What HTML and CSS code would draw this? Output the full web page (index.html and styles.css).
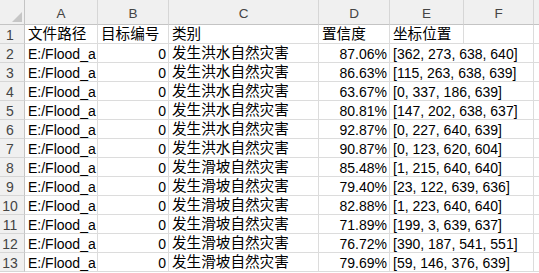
FILE: index.html
```html
<!DOCTYPE html>
<html lang="zh-CN">
<head>
<meta charset="utf-8">
<title>Sheet</title>
<link rel="stylesheet" href="styles.css">
</head>
<body>
<div class="sheet">
  <div class="corner"><svg class="tri" width="10" height="10" viewBox="0 0 10 10"><polygon points="10,0 10,10 0,10" fill="#c6c6c6"/></svg></div>
  <div class="ch">A</div><div class="ch">B</div><div class="ch">C</div><div class="ch">D</div><div class="ch">E</div><div class="ch">F</div><div class="ch last"></div>

  <div class="rh">1</div><div class="c cjk">文件路径</div><div class="c cjk">目标编号</div><div class="c cjk">类别</div><div class="c cjk">置信度</div><div class="c cjk">坐标位置</div><div class="c"></div><div class="c last"></div>

  <div class="rh">2</div><div class="c">E:/Flood_a</div><div class="c r">0</div><div class="c cjk">发生洪水自然灾害</div><div class="c r">87.06%</div><div class="c e2">[362, 273, 638, 640]</div><div class="c last"></div>
  <div class="rh">3</div><div class="c">E:/Flood_a</div><div class="c r">0</div><div class="c cjk">发生洪水自然灾害</div><div class="c r">86.63%</div><div class="c e2">[115, 263, 638, 639]</div><div class="c last"></div>
  <div class="rh">4</div><div class="c">E:/Flood_a</div><div class="c r">0</div><div class="c cjk">发生洪水自然灾害</div><div class="c r">63.67%</div><div class="c e2">[0, 337, 186, 639]</div><div class="c last"></div>
  <div class="rh">5</div><div class="c">E:/Flood_a</div><div class="c r">0</div><div class="c cjk">发生洪水自然灾害</div><div class="c r">80.81%</div><div class="c e2">[147, 202, 638, 637]</div><div class="c last"></div>
  <div class="rh">6</div><div class="c">E:/Flood_a</div><div class="c r">0</div><div class="c cjk">发生洪水自然灾害</div><div class="c r">92.87%</div><div class="c e2">[0, 227, 640, 639]</div><div class="c last"></div>
  <div class="rh">7</div><div class="c">E:/Flood_a</div><div class="c r">0</div><div class="c cjk">发生洪水自然灾害</div><div class="c r">90.87%</div><div class="c e2">[0, 123, 620, 604]</div><div class="c last"></div>
  <div class="rh">8</div><div class="c">E:/Flood_a</div><div class="c r">0</div><div class="c cjk">发生滑坡自然灾害</div><div class="c r">85.48%</div><div class="c e2">[1, 215, 640, 640]</div><div class="c last"></div>
  <div class="rh">9</div><div class="c">E:/Flood_a</div><div class="c r">0</div><div class="c cjk">发生滑坡自然灾害</div><div class="c r">79.40%</div><div class="c e2">[23, 122, 639, 636]</div><div class="c last"></div>
  <div class="rh">10</div><div class="c">E:/Flood_a</div><div class="c r">0</div><div class="c cjk">发生滑坡自然灾害</div><div class="c r">82.88%</div><div class="c e2">[1, 223, 640, 640]</div><div class="c last"></div>
  <div class="rh">11</div><div class="c">E:/Flood_a</div><div class="c r">0</div><div class="c cjk">发生滑坡自然灾害</div><div class="c r">71.89%</div><div class="c e2">[199, 3, 639, 637]</div><div class="c last"></div>
  <div class="rh">12</div><div class="c">E:/Flood_a</div><div class="c r">0</div><div class="c cjk">发生滑坡自然灾害</div><div class="c r">76.72%</div><div class="c e2">[390, 187, 541, 551]</div><div class="c last"></div>
  <div class="rh">13</div><div class="c">E:/Flood_a</div><div class="c r">0</div><div class="c cjk">发生滑坡自然灾害</div><div class="c r">79.69%</div><div class="c e2">[59, 146, 376, 639]</div><div class="c last"></div>
</div>
</body>
</html>
```

FILE: styles.css
```css
html, body {
  margin: 0;
  padding: 0;
  background: #ffffff;
}

.sheet {
  display: grid;
  grid-template-columns: 25px 73px 71px 150px 71px 74px 70px 1fr;
  grid-template-rows: 25px;
  grid-auto-rows: 19px;
  width: 539px;
  height: 273px;
  overflow: hidden;
  font-family: "Liberation Sans", "Noto Sans CJK SC", sans-serif;
  font-size: 14px;
  color: #000;
}

.sheet > div {
  box-sizing: border-box;
  overflow: hidden;
  white-space: nowrap;
}

.corner {
  background: #f0f0f0;
  border-right: 1px solid #c4c4c4;
  border-bottom: 1px solid #c4c4c4;
  display: flex;
  align-items: flex-end;
  justify-content: flex-end;
  padding: 0 2px 2px 0;
}

.tri {
  display: block;
}

.ch {
  background: #f0f0f0;
  border-right: 1px solid #d6d6d6;
  border-bottom: 1px solid #c4c4c4;
  color: #444;
  font-size: 13.5px;
  text-align: center;
  line-height: 18px;
  padding-top: 5px;
}

.rh {
  background: #f0f0f0;
  border-right: 1px solid #c4c4c4;
  border-bottom: 1px solid #d6d6d6;
  color: #444;
  text-align: center;
  padding-right: 4px;
  line-height: 18px;
  padding-top: 1px;
}

.c {
  border-right: 1px solid #dcdcdc;
  border-bottom: 1px solid #dcdcdc;
  line-height: 18px;
  padding: 1px 2px 0 3px;
}

.c.r {
  text-align: right;
  padding-right: 2px;
}

.c.e2 {
  grid-column: span 2;
}

.cjk {
  font-size: 14.6px;
  padding-top: 0;
}

.last {
  border-right: none;
}
```
